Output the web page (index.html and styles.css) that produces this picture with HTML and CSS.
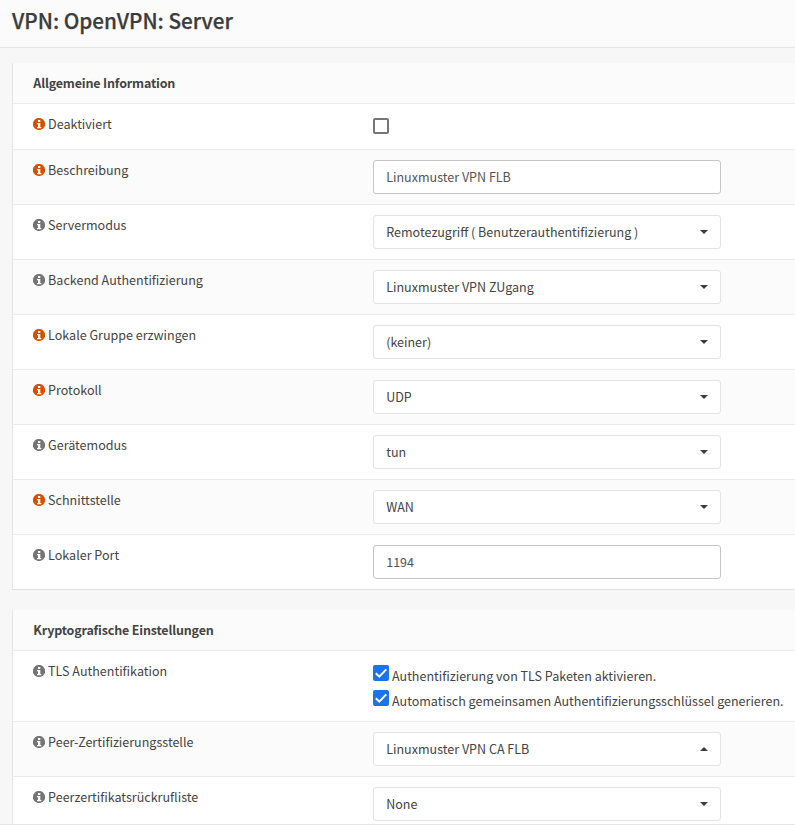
FILE: index.html
```html
<!DOCTYPE html>
<html lang="de">
<head>
<meta charset="utf-8">
<title>VPN: OpenVPN: Server</title>
<link rel="stylesheet" href="styles.css">
</head>
<body>
<svg class="defs" aria-hidden="true">
  <symbol id="info" viewBox="0 0 12 12"><circle cx="6" cy="6" r="6.1"/><path d="M5 2h2.3v2H5zM4 5h3.3v4H8.3v1.3H4V9h1V6.200H4z" fill="#fff"/></symbol>
  <symbol id="check" viewBox="0 0 16 16"><path d="M2.8 8.3l3.5 3.4 7-7.3" fill="none" stroke="#fff" stroke-width="2"/></symbol>
</svg>
<header class="page-head"><h1>VPN: OpenVPN: Server</h1></header>
<main class="content">
  <section class="panel">
    <h2>Allgemeine Information</h2>
    <div class="row short"><div class="label"><svg class="info hot"><use href="#info"/></svg><span>Deaktiviert</span></div><span class="box"></span></div>
    <div class="row alt"><div class="label"><svg class="info hot"><use href="#info"/></svg><span>Beschreibung</span></div><div class="control input"><span>Linuxmuster VPN FLB</span></div></div>
    <div class="row"><div class="label"><svg class="info"><use href="#info"/></svg><span>Servermodus</span></div><div class="control"><span>Remotezugriff ( Benutzerauthentifizierung )</span><i class="caret"></i></div></div>
    <div class="row alt"><div class="label"><svg class="info"><use href="#info"/></svg><span>Backend Authentifizierung</span></div><div class="control"><span>Linuxmuster VPN ZUgang</span><i class="caret"></i></div></div>
    <div class="row"><div class="label"><svg class="info hot"><use href="#info"/></svg><span>Lokale Gruppe erzwingen</span></div><div class="control"><span>(keiner)</span><i class="caret"></i></div></div>
    <div class="row alt"><div class="label"><svg class="info hot"><use href="#info"/></svg><span>Protokoll</span></div><div class="control"><span>UDP</span><i class="caret"></i></div></div>
    <div class="row"><div class="label"><svg class="info"><use href="#info"/></svg><span>Gerätemodus</span></div><div class="control"><span>tun</span><i class="caret"></i></div></div>
    <div class="row alt"><div class="label"><svg class="info hot"><use href="#info"/></svg><span>Schnittstelle</span></div><div class="control"><span>WAN</span><i class="caret"></i></div></div>
    <div class="row"><div class="label"><svg class="info"><use href="#info"/></svg><span>Lokaler Port</span></div><div class="control input"><span>1194</span></div></div>
  </section>
  <section class="panel">
    <h2>Kryptografische Einstellungen</h2>
    <div class="row tall"><div class="label"><svg class="info"><use href="#info"/></svg><span>TLS Authentifikation</span></div>
      <div class="checks">
        <div class="option"><svg class="checked"><use href="#check"/></svg><span>Authentifizierung von TLS Paketen aktivieren.</span></div>
        <div class="option"><svg class="checked"><use href="#check"/></svg><span>Automatisch gemeinsamen Authentifizierungsschlüssel generieren.</span></div>
      </div></div>
    <div class="row alt"><div class="label"><svg class="info"><use href="#info"/></svg><span>Peer-Zertifizierungsstelle</span></div><div class="control"><span>Linuxmuster VPN CA FLB</span><i class="caret up"></i></div></div>
    <div class="row"><div class="label"><svg class="info"><use href="#info"/></svg><span>Peerzertifikatsrückrufliste</span></div><div class="control"><span>None</span><i class="caret"></i></div></div>
  </section>
</main>
<footer class="page-foot"></footer>
</body>
</html>
```
FILE: styles.css
```css
* { box-sizing: border-box; }
body {
  margin: 0;
  height: 825px;
  overflow: hidden;
  display: flex;
  flex-direction: column;
  background: #f7f7f7;
  color: #444;
  font: 12.54px/20px "Noto Sans CJK SC", "Noto Sans", sans-serif;
  white-space: nowrap;
}
.defs { display: none; }
.page-head {
  flex: none;
  height: 48px;
  padding: 7px 12px 0;
  background: #fbfbfb;
  border-bottom: 1px solid #e5e5e5;
}
h1 {
  margin: 0;
  color: #3c3c3b;
  font-size: 20.7px;
  line-height: 26px;
  font-weight: 500;
  -webkit-text-stroke: 0.25px #3c3c3b;
}
.content {
  flex: 1;
  min-height: 0;
  overflow: hidden;
  padding: 15px 0 0 12px;
}
.panel {
  margin-bottom: 20px;
  border-left: 1px solid #e5e5e5;
  border-bottom: 1px solid #e0e0e0;
  background: #fff;
}
h2 {
  margin: 0;
  height: 40px;
  padding: 10px 20px 10px 20.3px;
  font-size: 12.5px;
  letter-spacing: -0.17px;
  line-height: 20px;
  font-weight: 700;
  background: #fbfbfb;
}
.row {
  display: flex;
  align-items: flex-start;
  height: 55px;
  padding: 10px 0 0 20px;
  border-top: 1px solid #ebebeb;
}
.row.short { height: 46px; }
.row.tall { height: 71px; }
.row.alt { background: #fbfbfb; }
.label { display: flex; width: 340px; gap: 3.1px; }
.info { width: 12px; height: 12px; margin-top: 4px; fill: #757575; overflow: visible; }
.info.hot { fill: #d94f00; }
.control {
  display: flex;
  justify-content: space-between;
  align-items: center;
  width: 348px;
  height: 34px;
  padding: 0 12px 0 12.2px;
  border: 1px solid #e3e3e3;
  border-radius: 3px;
  background: #fff;
}
.control.input { border-color: #c6c6c6; color: #555; }
.caret {
  border: 4px solid transparent;
  border-top-color: #3c3c3b;
  border-bottom: 0;
}
.caret.up {
  border-top: 0;
  border-bottom: 4px solid #3c3c3b;
}
.box {
  width: 16px;
  height: 16px;
  margin-top: 4px;
  border: 2px solid #767676;
  border-radius: 2px;
}
.option { display: flex; height: 25px; padding-top: 4px; gap: 3px; }
.option span { margin-top: 1px; }
.checked { width: 16px; height: 16px; border-radius: 2px; background: #1a73e8; }
.page-foot { flex: none; height: 1px; background: #e5e5e5; }
```
